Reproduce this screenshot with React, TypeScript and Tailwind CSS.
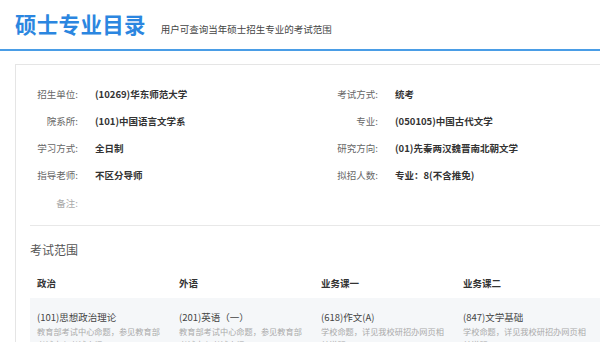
const info: [string, string][] = [
  ["招生单位:", "(10269)华东师范大学"],
  ["考试方式:", "统考"],
  ["院系所:", "(101)中国语言文学系"],
  ["专业:", "(050105)中国古代文学"],
  ["学习方式:", "全日制"],
  ["研究方向:", "(01)先秦两汉魏晋南北朝文学"],
  ["指导老师:", "不区分导师"],
  ["拟招人数:", "专业：8(不含推免)"],
];

const subjects = [
  { head: "政治", name: "(101)思想政治理论", desc: "教育部考试中心命题，参见教育部考试中心考试大纲" },
  { head: "外语", name: "(201)英语（一）", desc: "教育部考试中心命题，参见教育部考试中心考试大纲" },
  { head: "业务课一", name: "(618)作文(A)", desc: "学校命题，详见我校研招办网页相关说明" },
  { head: "业务课二", name: "(847)文学基础", desc: "学校命题，详见我校研招办网页相关说明" },
];

const InfoRow = ({ label, value }: { label: string; value: string }) => (
  <div className="flex items-center h-[27.3px]">
    <span className="w-[62px] text-right text-[9.5px] text-[#666]">{label}</span>
    <span className="ml-[17px] text-[9.5px] font-bold text-[#333]">{value}</span>
  </div>
);

export default function App() {
  return (
    <div
      className="w-[600px] h-[342px] overflow-hidden bg-white"
      style={{ fontFamily: '"Noto Sans CJK SC", "Noto Sans", sans-serif' }}
    >
      <header className="flex items-baseline h-[51px] pt-[9px] pl-[15px] border-b-2 border-[#4a9de6]">
        <h1 className="text-[21.5px] leading-[30px] font-bold tracking-[0.3px] text-[#2b86e0]">硕士专业目录</h1>
        <p className="ml-[15px] text-[9.5px] text-[#444]">用户可查询当年硕士招生专业的考试范围</p>
      </header>

      <section className="mt-[13px] ml-[15px] border-l border-t border-[#e5e5e5] pt-[15px]">
        <div className="grid grid-cols-[300px_1fr]">
          {info.map(([label, value]) => (
            <InfoRow key={label} label={label} value={value} />
          ))}
          <div className="flex items-center h-[27.3px]">
            <span className="w-[62px] text-right text-[9.5px] text-[#aaa]">备注:</span>
          </div>
        </div>

        <div className="ml-[14px] mt-[9px] border-t border-[#e8e8e8]" />

        <h2 className="ml-[14px] mt-[16px] text-[12px] leading-[16px] text-[#555]">考试范围</h2>

        <div className="ml-[14px] mt-[10px]">
          <div className="flex h-[30px] items-center">
            {subjects.map((s) => (
              <div key={s.head} className="w-[142px] px-[7px] text-[9.5px] font-bold text-[#333]">
                {s.head}
              </div>
            ))}
          </div>
          <div className="flex bg-[#f5f7f9] pt-[12px] pb-[8px]">
            {subjects.map((s) => (
              <div key={s.head} className="w-[142px] px-[7px]">
                <p className="text-[9.5px] leading-[14px] text-[#444]">{s.name}</p>
                <p className="mt-[1px] text-[8.2px] leading-[13px] text-[#aaa]">{s.desc}</p>
              </div>
            ))}
          </div>
        </div>
      </section>
    </div>
  );
}
